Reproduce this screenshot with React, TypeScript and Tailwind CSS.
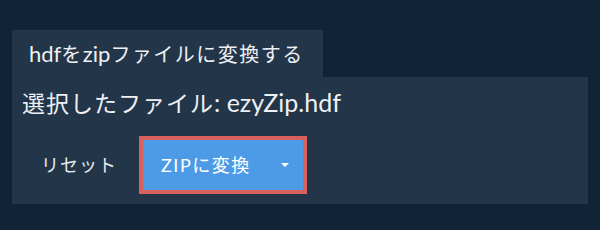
export default function App() {
  return (
    <div
      className="h-[230px] w-[600px] bg-[#112337] pt-[30px] px-[12px] text-[#eef0f3]"
      style={{ fontFamily: 'Lato, "Noto Sans CJK JP", sans-serif' }}
    >
      {/* タブ */}
      <div className="w-[311px] h-[47px] pl-[17px] flex items-center bg-[#223549] text-[20px] tracking-[1.5px]">
        <span className="text-[22px] tracking-normal">hdf</span>を
        <span className="text-[22px] tracking-normal">zip</span>ファイルに変換する
      </div>

      {/* パネル */}
      <div className="bg-[#223549] pl-[10px] pt-[12px] pb-[10px]">
        <div className="h-[28px] flex items-center text-[23px] tracking-[1px] whitespace-pre">
          選択したファイル<span className="text-[25px] tracking-normal">: ezyZip.hdf</span>
        </div>
        <div className="mt-[19px] flex items-center">
          <button className="w-[117px] h-[58px] pl-[19px] text-left text-[18px] tracking-[1px] text-[#e8eaee]">
            リセット
          </button>
          <button className="w-[168px] h-[58px] border-4 border-[#d9605c] bg-[#4d9be6] pl-[18px] flex items-center text-[18px] tracking-[1.5px] text-white">
            <span>ZIPに変換</span>
            <span className="ml-auto mr-[14px] w-0 h-0 border-l-4 border-r-4 border-t-4 border-l-transparent border-r-transparent border-t-white" />
          </button>
        </div>
      </div>
    </div>
  );
}
